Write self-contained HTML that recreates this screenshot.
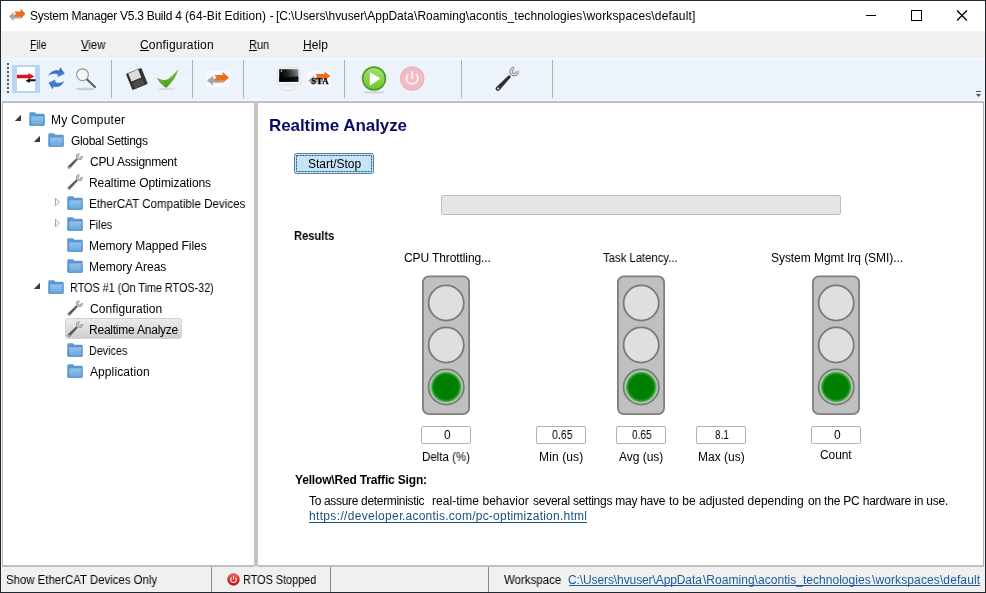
<!DOCTYPE html>
<html>
<head>
<meta charset="utf-8">
<title>System Manager</title>
<style>
html,body{margin:0;padding:0;}
body{width:986px;height:593px;overflow:hidden;position:relative;background:#f0f0f0;
 font-family:"Liberation Sans","DejaVu Sans",sans-serif;font-size:12px;color:#000;}
.abs{position:absolute;}
.g{position:absolute;left:0;top:0;width:0;height:0;}
.t{position:absolute;white-space:nowrap;line-height:14px;height:14px;will-change:transform;}
a{color:#1d4f7e;text-decoration:underline;text-decoration-skip-ink:none;}
a.b{color:#1a5c9c;}
.t u{text-decoration-skip-ink:none;}
.sel{background:linear-gradient(#ececec,#cecece);border:1px solid #d2d2d2;border-radius:3px;box-sizing:border-box;}
.tb{position:absolute;height:18px;width:50px;box-sizing:border-box;border:1px solid #b2b2b2;background:#fff;border-radius:2px;}
.sep{position:absolute;top:60px;width:1px;height:38px;background:#aab2bd;}
.ssep{position:absolute;top:567px;width:1px;height:25px;background:#8a8a8a;}
</style>
</head>
<body>
<svg width="0" height="0" style="position:absolute"><defs>
<linearGradient id="fg" x1="0" y1="0" x2="0" y2="1"><stop offset="0" stop-color="#93c5ef"/><stop offset="1" stop-color="#68a8de"/></linearGradient>
<linearGradient id="fb" x1="0" y1="0" x2="0" y2="1"><stop offset="0" stop-color="#5f9cd3"/><stop offset="1" stop-color="#4382c0"/></linearGradient>
<radialGradient id="gg" cx="0.5" cy="0.5" r="0.5"><stop offset="0" stop-color="#008000"/><stop offset="0.68" stop-color="#008000"/><stop offset="0.78" stop-color="#2a942a"/><stop offset="0.86" stop-color="#7fc07f"/><stop offset="0.94" stop-color="#c0dcc0"/><stop offset="1" stop-color="#c8e0c8"/></radialGradient>
</defs></svg>

<div class="abs" style="left:0;top:0;width:986px;height:31px;background:#fff"></div>
<div class="abs" style="left:0;top:31px;width:986px;height:27px;background:#f0f0f0"></div>
<div class="abs" style="left:0;top:58px;width:986px;height:43px;background:#ecf3fb;border-top:1px solid #f9fbfe;border-bottom:1px solid #f6f9fd;box-sizing:border-box"></div>
<div class="abs" style="left:2px;top:101px;width:252px;height:466px;background:#fff;box-sizing:border-box;border:1px solid #bcbcbc;border-top:2px solid #c0c0c0;border-bottom:2px solid #c0c0c0;border-right:none"></div>
<div class="abs" style="left:254px;top:101px;width:4px;height:465px;background:#c3c3c3"></div>
<div class="abs" style="left:258px;top:101px;width:726px;height:466px;background:#fff;box-sizing:border-box;border-top:2px solid #c0c0c0;border-bottom:2px solid #c0c0c0;border-right:1px solid #b2b2b2"></div>

<svg class="abs" style="left:7px;top:63px" width="2" height="30"><rect x="0" y="0" width="2" height="2" fill="#555"/><rect x="0" y="4" width="2" height="2" fill="#555"/><rect x="0" y="8" width="2" height="2" fill="#555"/><rect x="0" y="12" width="2" height="2" fill="#555"/><rect x="0" y="16" width="2" height="2" fill="#555"/><rect x="0" y="20" width="2" height="2" fill="#555"/><rect x="0" y="24" width="2" height="2" fill="#555"/><rect x="0" y="28" width="2" height="2" fill="#555"/></svg>
<div class="abs" style="left:12px;top:65px;width:28px;height:28px;background:#b8d6f3"></div>
<svg class="abs" style="left:17px;top:67px" width="19" height="24" viewBox="0 0 19 24">
<rect x="0" y="0" width="18" height="24" fill="#fff"/>
<path d="M0 7.800H11.5V5.900L17.4 9.500L11.5 12.600V11.300H0Z" fill="#e01020"/>
<path d="M18.5 12.2H12.8V11.6L8.600 13.800L12.8 16V14.200H18.5Z" fill="#101010"/>
</svg>
<svg class="abs" style="left:47px;top:66px" width="20" height="24" viewBox="0 0 20 24">
<defs><linearGradient id="ra" x1="0" y1="0" x2="0" y2="1"><stop offset="0" stop-color="#2a5ebc"/><stop offset="1" stop-color="#4a88e0"/></linearGradient>
<linearGradient id="rb" x1="0" y1="0" x2="0" y2="1"><stop offset="0" stop-color="#4a8ae2"/><stop offset="1" stop-color="#2e66c6"/></linearGradient></defs>
<path d="M1.100 10.100C3 6 7 3.600 12.200 4.600L13.300 1.300L17.800 7.700L10.900 10.900L10.400 8.300C7 7.200 4 8 1.100 10.100Z" fill="url(#ra)"/>
<path d="M1.400 16.800L8.100 13.500L8.700 16.200C11.500 17.200 14.500 16.800 17.200 14.700C16 19 11.500 22 6.600 20.500L5.700 23.200Z" fill="url(#rb)"/>
</svg>
<svg class="abs" style="left:73px;top:66px" width="26" height="26" viewBox="0 0 26 26">
<ellipse cx="12.5" cy="23" rx="10" ry="1.4" fill="#c9cfd8"/>
<path d="M13.800 13.200L22 21" stroke="#585858" stroke-width="1.900" stroke-linecap="round"/>
<circle cx="9.500" cy="8.700" r="5.900" fill="#f3f5f7" stroke="#979797" stroke-width="1.200"/>
</svg>
<div class="abs" style="left:111px;top:60px;width:1px;height:38px;background:#aab2bd"></div>
<div class="abs" style="left:192px;top:60px;width:1px;height:38px;background:#aab2bd"></div>
<div class="abs" style="left:243px;top:60px;width:1px;height:38px;background:#aab2bd"></div>
<div class="abs" style="left:344px;top:60px;width:1px;height:38px;background:#aab2bd"></div>
<div class="abs" style="left:461px;top:60px;width:1px;height:38px;background:#aab2bd"></div>
<div class="abs" style="left:552px;top:60px;width:1px;height:38px;background:#aab2bd"></div>
<svg class="abs" style="left:124px;top:66px" width="26" height="26" viewBox="0 0 26 26">
<g transform="rotate(-22 13 13)">
<rect x="4.6" y="4.2" width="16.6" height="17.4" rx="1" fill="#343436"/>
<rect x="7" y="4.6" width="10.6" height="8.6" fill="#dcdde0"/>
<rect x="7.6" y="14.8" width="10.6" height="6.4" fill="#4c4c50"/>
</g></svg>
<svg class="abs" style="left:155px;top:66px" width="26" height="26" viewBox="0 0 26 26">
<defs><linearGradient id="ck" x1="0" y1="0" x2="0.3" y2="1"><stop offset="0" stop-color="#86d045"/><stop offset="1" stop-color="#4c9e1c"/></linearGradient></defs>
<ellipse cx="11.6" cy="23" rx="8.6" ry="1.1" fill="#d3dae3"/>
<path d="M2 11.6 C3 15.2 7 19.2 11.2 21.9 C15.8 18 21.8 10 23.3 3.2 C18.4 8.6 14.5 12.8 11.4 13.8 C8 14.6 4.5 13.4 2 11.6Z" fill="url(#ck)"/>
</svg>
<svg class="abs" style="left:206px;top:71px" width="24" height="16" viewBox="0 0 24 16">
<rect x="0" y="0" width="24" height="16" fill="#f7f9fc"/>
<path d="M1 9.5L7 4.8V7.6H16V11.8H7V14.4Z" fill="#a8a8a8"/>
<path d="M23 6.5L16.6 1V4H8.5L10.4 6.6L8.5 9.4H16.6V12Z" fill="#e8701c"/>
</svg>
<svg class="abs" style="left:276px;top:66px" width="26" height="26" viewBox="0 0 26 26">
<defs><linearGradient id="mg" x1="0" y1="0.200" x2="1" y2="0"><stop offset="0" stop-color="#050505"/><stop offset="0.350" stop-color="#1c1c1c"/><stop offset="1" stop-color="#8e8e8e"/></linearGradient></defs>
<ellipse cx="12.600" cy="22" rx="7.200" ry="2.500" fill="#f1f3f5" stroke="#d2d6da" stroke-width="0.700"/>
<path d="M9.600 18H15.800L16.600 21.500H8.800Z" fill="#eceef0"/>
<path d="M2.600 1.800H23Q24 1.800 24 2.800V16.500L24.600 18.400H1L1.600 16.500V2.800Q1.600 1.800 2.600 1.800Z" fill="#f4f5f7" stroke="#d4d8dc" stroke-width="0.600"/>
<rect x="3.200" y="3.200" width="19.200" height="12.600" fill="url(#mg)"/>
<path d="M3.200 11.600C9 11.400 16 11 22.400 10.200V15.800H3.200Z" fill="#000" opacity="0.800"/>
<path d="M4.600 4.600L6.600 4.200L5 6.200Z" fill="#e8e8e8"/>
</svg>
<svg class="abs" style="left:307px;top:71px;will-change:transform" width="24" height="16" viewBox="0 0 24 16">
<rect x="0" y="0" width="24" height="16" fill="#f7f9fc"/>
<path d="M1 9.5L7 4.8V7.6H16V11.8H7V14.4Z" fill="#a8a8a8"/>
<path d="M23.4 5L17.6 0.6V3H8.5L10 5L8.5 7.4H17.6V9.6Z" fill="#e8701c"/>
<text x="4.2" y="13.1" font-family="'Liberation Serif','DejaVu Serif',serif" font-weight="bold" font-size="8.8" fill="#000" stroke="#000" stroke-width="0.25" letter-spacing="0.5">STA</text>
</svg>
<svg class="abs" style="left:360px;top:64px" width="28" height="32" viewBox="0 0 28 32">
<defs><linearGradient id="pg" x1="0" y1="0" x2="0" y2="1"><stop offset="0" stop-color="#a6e070"/><stop offset="1" stop-color="#6cc828"/></linearGradient></defs>
<ellipse cx="14" cy="28.4" rx="11" ry="1.2" fill="#ccd3dc"/>
<circle cx="14" cy="14.5" r="11.4" fill="url(#pg)" stroke="#4c9a24" stroke-width="1.6"/>
<path d="M9.8 8.2L20.6 14.6L9.8 21.8Z" fill="#fff"/>
</svg>
<svg class="abs" style="left:398px;top:64px" width="28" height="32" viewBox="0 0 28 32">
<circle cx="14.2" cy="14.5" r="11.6" fill="#f2bcc6" stroke="#efb0bc" stroke-width="1.2"/>
<path d="M10.4 10.2A5.6 5.6 0 1 0 18 10.2" fill="none" stroke="#fdf4f5" stroke-width="1.6"/>
<path d="M14.2 7.2V15" stroke="#fdf4f5" stroke-width="1.8"/>
</svg>
<svg class="abs" style="left:494px;top:65px" width="27" height="28" viewBox="0 0 27 28">
<defs><linearGradient id="wh" x1="0" y1="0" x2="1" y2="1"><stop offset="0" stop-color="#6a6a6a"/><stop offset="0.5" stop-color="#2c2c2c"/><stop offset="1" stop-color="#5a5a5a"/></linearGradient></defs>
<path d="M2.3 21.9 L15.1 10 L17 11.9 L5.7 25.1 A2.3 2.3 0 0 1 2.3 21.9Z" fill="url(#wh)"/>
<circle cx="4.1" cy="23.5" r="1" fill="#e4e4e4"/>
<g transform="translate(20 6.600) rotate(-48)"><path d="M2.500 2A3.100 3.100 0 1 1 2.500 -2" fill="none" stroke="#6e6e6e" stroke-width="3.200"/><path d="M2.500 2A3.100 3.100 0 1 1 2.500 -2" fill="none" stroke="#dcdcdc" stroke-width="1.800"/></g>
</svg>
<svg class="abs" style="left:976px;top:90px" width="5" height="8" viewBox="0 0 5 8"><path d="M0 1.500H5" stroke="#555" stroke-width="1"/><path d="M0 4H5L2.500 7Z" fill="#505050"/></svg>
<svg class="abs" style="left:8px;top:7px" width="18" height="16" viewBox="0 0 18 16">
<path d="M1 9.5L5.6 5V7.8H12.4V11.4H5.6V14Z" fill="#a8a8a8"/>
<path d="M17.4 6.8L12.6 1.6V4.4H6.4L7.8 7L6.4 9.6H12.6V12.2Z" fill="#e8701c"/>
</svg>
<svg class="abs" style="left:760px;top:1px" width="226" height="30" viewBox="0 0 226 30">
<path d="M106 14.5H116" stroke="#000" stroke-width="1"/>
<rect x="151.5" y="9.500" width="10" height="10" fill="none" stroke="#000" stroke-width="1"/>
<path d="M197 9.500L207 19.5M207 9.500L197 19.5" stroke="#000" stroke-width="1.25"/>
</svg>

<svg class="abs" style="left:14px;top:114px" width="8" height="8" viewBox="0 0 8 8"><path d="M7 0.800V7H0.800Z" fill="#3a3a3a"/></svg>
<svg class="abs" style="left:29px;top:112px" width="16" height="14" viewBox="0 0 16 14"><path d="M0.3 1.3 Q0.3 0.3 1.3 0.3 H5.8 Q6.4 0.3 6.8 1 L7.2 1.8 H14.6 Q15.7 1.8 15.7 2.9 V12.7 Q15.7 13.800 14.6 13.800 H1.4 Q0.3 13.800 0.3 12.7Z" fill="url(#fb)"/><rect x="1.800" y="4.100" width="13" height="8.900" rx="0.500" fill="url(#fg)" stroke="#5791cb" stroke-width="0.600"/></svg>
<svg class="abs" style="left:33px;top:135px" width="8" height="8" viewBox="0 0 8 8"><path d="M7 0.800V7H0.800Z" fill="#3a3a3a"/></svg>
<svg class="abs" style="left:48px;top:133px" width="16" height="14" viewBox="0 0 16 14"><path d="M0.3 1.3 Q0.3 0.3 1.3 0.3 H5.8 Q6.4 0.3 6.8 1 L7.2 1.8 H14.6 Q15.7 1.8 15.7 2.9 V12.7 Q15.7 13.800 14.6 13.800 H1.4 Q0.3 13.800 0.3 12.7Z" fill="url(#fb)"/><rect x="1.800" y="4.100" width="13" height="8.900" rx="0.500" fill="url(#fg)" stroke="#5791cb" stroke-width="0.600"/></svg>
<svg class="abs" style="left:67px;top:153px" width="16" height="16" viewBox="0 0 16 16"><path d="M0.7 13.5 L9.3 5.3 L10.8 6.8 L2.9 15.5 A1.55 1.55 0 0 1 0.7 13.5Z" fill="#5c5c5c"/><circle cx="1.9" cy="14.4" r="0.7" fill="#d0d0d0"/><g transform="translate(12.4 3.7) rotate(-50)"><path d="M1.8 1.5A2.3 2.3 0 1 1 1.8 -1.5" fill="none" stroke="#7d7d7d" stroke-width="2.3"/><path d="M1.8 1.5A2.3 2.3 0 1 1 1.8 -1.5" fill="none" stroke="#cdcdcd" stroke-width="1.2"/></g></svg>
<svg class="abs" style="left:67px;top:174px" width="16" height="16" viewBox="0 0 16 16"><path d="M0.7 13.5 L9.3 5.3 L10.8 6.8 L2.9 15.5 A1.55 1.55 0 0 1 0.7 13.5Z" fill="#5c5c5c"/><circle cx="1.9" cy="14.4" r="0.7" fill="#d0d0d0"/><g transform="translate(12.4 3.7) rotate(-50)"><path d="M1.8 1.5A2.3 2.3 0 1 1 1.8 -1.5" fill="none" stroke="#7d7d7d" stroke-width="2.3"/><path d="M1.8 1.5A2.3 2.3 0 1 1 1.8 -1.5" fill="none" stroke="#cdcdcd" stroke-width="1.2"/></g></svg>
<svg class="abs" style="left:54px;top:197px" width="7" height="10" viewBox="0 0 7 10"><path d="M1.5 1.2L5.3 5L1.5 8.8Z" fill="#fff" stroke="#a6a6a6" stroke-width="1"/></svg>
<svg class="abs" style="left:67px;top:196px" width="16" height="14" viewBox="0 0 16 14"><path d="M0.3 1.3 Q0.3 0.3 1.3 0.3 H5.8 Q6.4 0.3 6.8 1 L7.2 1.8 H14.6 Q15.7 1.8 15.7 2.9 V12.7 Q15.7 13.800 14.6 13.800 H1.4 Q0.3 13.800 0.3 12.7Z" fill="url(#fb)"/><rect x="1.800" y="4.100" width="13" height="8.900" rx="0.500" fill="url(#fg)" stroke="#5791cb" stroke-width="0.600"/></svg>
<svg class="abs" style="left:54px;top:218px" width="7" height="10" viewBox="0 0 7 10"><path d="M1.5 1.2L5.3 5L1.5 8.8Z" fill="#fff" stroke="#a6a6a6" stroke-width="1"/></svg>
<svg class="abs" style="left:67px;top:217px" width="16" height="14" viewBox="0 0 16 14"><path d="M0.3 1.3 Q0.3 0.3 1.3 0.3 H5.8 Q6.4 0.3 6.8 1 L7.2 1.8 H14.6 Q15.7 1.8 15.7 2.9 V12.7 Q15.7 13.800 14.6 13.800 H1.4 Q0.3 13.800 0.3 12.7Z" fill="url(#fb)"/><rect x="1.800" y="4.100" width="13" height="8.900" rx="0.500" fill="url(#fg)" stroke="#5791cb" stroke-width="0.600"/></svg>
<svg class="abs" style="left:67px;top:238px" width="16" height="14" viewBox="0 0 16 14"><path d="M0.3 1.3 Q0.3 0.3 1.3 0.3 H5.8 Q6.4 0.3 6.8 1 L7.2 1.8 H14.6 Q15.7 1.8 15.7 2.9 V12.7 Q15.7 13.800 14.6 13.800 H1.4 Q0.3 13.800 0.3 12.7Z" fill="url(#fb)"/><rect x="1.800" y="4.100" width="13" height="8.900" rx="0.500" fill="url(#fg)" stroke="#5791cb" stroke-width="0.600"/></svg>
<svg class="abs" style="left:67px;top:259px" width="16" height="14" viewBox="0 0 16 14"><path d="M0.3 1.3 Q0.3 0.3 1.3 0.3 H5.8 Q6.4 0.3 6.8 1 L7.2 1.8 H14.6 Q15.7 1.8 15.7 2.9 V12.7 Q15.7 13.800 14.6 13.800 H1.4 Q0.3 13.800 0.3 12.7Z" fill="url(#fb)"/><rect x="1.800" y="4.100" width="13" height="8.900" rx="0.500" fill="url(#fg)" stroke="#5791cb" stroke-width="0.600"/></svg>
<svg class="abs" style="left:33px;top:282px" width="8" height="8" viewBox="0 0 8 8"><path d="M7 0.800V7H0.800Z" fill="#3a3a3a"/></svg>
<svg class="abs" style="left:48px;top:280px" width="16" height="14" viewBox="0 0 16 14"><path d="M0.3 1.3 Q0.3 0.3 1.3 0.3 H5.8 Q6.4 0.3 6.8 1 L7.2 1.8 H14.6 Q15.7 1.8 15.7 2.9 V12.7 Q15.7 13.800 14.6 13.800 H1.4 Q0.3 13.800 0.3 12.7Z" fill="url(#fb)"/><rect x="1.800" y="4.100" width="13" height="8.900" rx="0.500" fill="url(#fg)" stroke="#5791cb" stroke-width="0.600"/></svg>
<svg class="abs" style="left:67px;top:300px" width="16" height="16" viewBox="0 0 16 16"><path d="M0.7 13.5 L9.3 5.3 L10.8 6.8 L2.9 15.5 A1.55 1.55 0 0 1 0.7 13.5Z" fill="#5c5c5c"/><circle cx="1.9" cy="14.4" r="0.7" fill="#d0d0d0"/><g transform="translate(12.4 3.7) rotate(-50)"><path d="M1.8 1.5A2.3 2.3 0 1 1 1.8 -1.5" fill="none" stroke="#7d7d7d" stroke-width="2.3"/><path d="M1.8 1.5A2.3 2.3 0 1 1 1.8 -1.5" fill="none" stroke="#cdcdcd" stroke-width="1.2"/></g></svg>
<div class="abs sel" style="left:65px;top:318px;width:117px;height:21px"></div>
<svg class="abs" style="left:67px;top:321px" width="16" height="16" viewBox="0 0 16 16"><path d="M0.7 13.5 L9.3 5.3 L10.8 6.8 L2.9 15.5 A1.55 1.55 0 0 1 0.7 13.5Z" fill="#5c5c5c"/><circle cx="1.9" cy="14.4" r="0.7" fill="#d0d0d0"/><g transform="translate(12.4 3.7) rotate(-50)"><path d="M1.8 1.5A2.3 2.3 0 1 1 1.8 -1.5" fill="none" stroke="#7d7d7d" stroke-width="2.3"/><path d="M1.8 1.5A2.3 2.3 0 1 1 1.8 -1.5" fill="none" stroke="#cdcdcd" stroke-width="1.2"/></g></svg>
<svg class="abs" style="left:67px;top:343px" width="16" height="14" viewBox="0 0 16 14"><path d="M0.3 1.3 Q0.3 0.3 1.3 0.3 H5.8 Q6.4 0.3 6.8 1 L7.2 1.8 H14.6 Q15.7 1.8 15.7 2.9 V12.7 Q15.7 13.800 14.6 13.800 H1.4 Q0.3 13.800 0.3 12.7Z" fill="url(#fb)"/><rect x="1.800" y="4.100" width="13" height="8.900" rx="0.500" fill="url(#fg)" stroke="#5791cb" stroke-width="0.600"/></svg>
<svg class="abs" style="left:67px;top:364px" width="16" height="14" viewBox="0 0 16 14"><path d="M0.3 1.3 Q0.3 0.3 1.3 0.3 H5.8 Q6.4 0.3 6.8 1 L7.2 1.8 H14.6 Q15.7 1.8 15.7 2.9 V12.7 Q15.7 13.800 14.6 13.800 H1.4 Q0.3 13.800 0.3 12.7Z" fill="url(#fb)"/><rect x="1.800" y="4.100" width="13" height="8.900" rx="0.500" fill="url(#fg)" stroke="#5791cb" stroke-width="0.600"/></svg>
<svg class="abs" style="left:294px;top:153px" width="80" height="21" viewBox="0 0 80 21"><rect x="0.5" y="0.5" width="79" height="20" rx="2" fill="#c7e3f7" stroke="#4f82a8"/><rect x="2.5" y="2.5" width="75" height="16" fill="none" stroke="#2a566e" stroke-dasharray="2 1"/></svg>
<div class="abs" style="left:441px;top:195px;width:400px;height:20px;box-sizing:border-box;border:1px solid #bcbcbc;background:#e6e6e6;border-radius:2px"></div>
<svg class="abs" style="left:421px;top:274px" width="50" height="143" viewBox="0 0 50 143"><rect x="1.9" y="2.4" width="46.2" height="137.7" rx="6" ry="6" fill="#c0c0c0" stroke="#7e7e7e" stroke-width="1.8"/><circle cx="25.2" cy="29" r="17.6" fill="#dfdfdf" stroke="#7a7a7a" stroke-width="1.8"/><circle cx="25.2" cy="71" r="17.6" fill="#dfdfdf" stroke="#7a7a7a" stroke-width="1.8"/><circle cx="25.2" cy="113" r="17.6" fill="url(#gg)" stroke="#7a7a7a" stroke-width="1.8"/></svg>
<svg class="abs" style="left:616px;top:274px" width="50" height="143" viewBox="0 0 50 143"><rect x="1.9" y="2.4" width="46.2" height="137.7" rx="6" ry="6" fill="#c0c0c0" stroke="#7e7e7e" stroke-width="1.8"/><circle cx="25.2" cy="29" r="17.6" fill="#dfdfdf" stroke="#7a7a7a" stroke-width="1.8"/><circle cx="25.2" cy="71" r="17.6" fill="#dfdfdf" stroke="#7a7a7a" stroke-width="1.8"/><circle cx="25.2" cy="113" r="17.6" fill="url(#gg)" stroke="#7a7a7a" stroke-width="1.8"/></svg>
<svg class="abs" style="left:811px;top:274px" width="50" height="143" viewBox="0 0 50 143"><rect x="1.9" y="2.4" width="46.2" height="137.7" rx="6" ry="6" fill="#c0c0c0" stroke="#7e7e7e" stroke-width="1.8"/><circle cx="25.2" cy="29" r="17.6" fill="#dfdfdf" stroke="#7a7a7a" stroke-width="1.8"/><circle cx="25.2" cy="71" r="17.6" fill="#dfdfdf" stroke="#7a7a7a" stroke-width="1.8"/><circle cx="25.2" cy="113" r="17.6" fill="url(#gg)" stroke="#7a7a7a" stroke-width="1.8"/></svg>
<div class="tb" style="left:421px;top:426px"></div>
<div class="tb" style="left:536px;top:426px"></div>
<div class="tb" style="left:616px;top:426px"></div>
<div class="tb" style="left:696px;top:426px"></div>
<div class="tb" style="left:811px;top:426px"></div>
<div class="abs" style="left:569px;top:585px;width:411px;height:1px;background:#1a5c9c"></div>
<div class="abs" style="left:309px;top:522px;width:278px;height:1px;background:#1d4f7e"></div>
<div class="ssep" style="left:211px"></div>
<div class="ssep" style="left:330px"></div>
<div class="ssep" style="left:488px"></div>
<svg class="abs" style="left:227px;top:573px" width="13" height="13" viewBox="0 0 13 13"><defs><linearGradient id="rg" x1="0" y1="0" x2="0" y2="1"><stop offset="0" stop-color="#f07070"/><stop offset="0.5" stop-color="#dc2828"/><stop offset="1" stop-color="#b81414"/></linearGradient></defs><circle cx="6.5" cy="6.5" r="5.9" fill="url(#rg)" stroke="#c83030" stroke-width="0.6"/><path d="M4.600 4.700A2.800 2.800 0 1 0 8.400 4.700" fill="none" stroke="#fff" stroke-width="1.100"/><path d="M6.500 3V6.600" stroke="#fff" stroke-width="1.100"/></svg>
<div class="g"><span class="t" id="ti1" style="left:30px;top:9px;font-size:12px;letter-spacing:-0.267px;">System Manager V5.3 Build 4</span> <span class="t" id="ti2" style="left:185px;top:9px;font-size:12px;letter-spacing:0.116px;">(64-Bit Edition) -</span> <span class="t" id="ti3" style="left:276px;top:9px;font-size:12px;letter-spacing:-0.078px;">[C:\Users\hvuser\AppData</span><span class="t" id="ti4" style="left:414px;top:9px;font-size:12px;letter-spacing:0.051px;">\Roaming\acontis_technologies</span><span class="t" id="ti5" style="left:583px;top:9px;font-size:12px;letter-spacing:0.152px;">\workspaces\default]</span></div>
<span class="t" id="m1" style="left:30px;top:38px;font-size:12px;letter-spacing:0.000px;transform:scaleX(0.8497);transform-origin:0 50%;"><u>F</u>ile</span>
<span class="t" id="m2" style="left:81px;top:38px;font-size:12px;letter-spacing:0.000px;transform:scaleX(0.9386);transform-origin:0 50%;"><u>V</u>iew</span>
<span class="t" id="m3" style="left:140px;top:38px;font-size:12px;letter-spacing:0.180px;"><u>C</u>onfiguration</span>
<span class="t" id="m4" style="left:249px;top:38px;font-size:12px;letter-spacing:0.000px;transform:scaleX(0.9177);transform-origin:0 50%;"><u>R</u>un</span>
<span class="t" id="m5" style="left:303px;top:38px;font-size:12px;letter-spacing:0.060px;"><u>H</u>elp</span>
<span class="t" id="t0" style="left:51px;top:113px;font-size:12px;letter-spacing:0.198px;">My Computer</span>
<span class="t" id="t1" style="left:71px;top:134px;font-size:12px;letter-spacing:-0.321px;">Global Settings</span>
<span class="t" id="t2" style="left:90px;top:155px;font-size:12px;letter-spacing:-0.277px;">CPU Assignment</span>
<span class="t" id="t3" style="left:89px;top:176px;font-size:12px;letter-spacing:-0.060px;">Realtime Optimizations</span>
<span class="t" id="t4" style="left:89px;top:197px;font-size:12px;letter-spacing:0.000px;transform:scaleX(0.9677);transform-origin:0 50%;">EtherCAT Compatible Devices</span>
<span class="t" id="t5" style="left:89px;top:218px;font-size:12px;letter-spacing:0.000px;transform:scaleX(0.9208);transform-origin:0 50%;">Files</span>
<span class="t" id="t6" style="left:89px;top:239px;font-size:12px;letter-spacing:-0.060px;">Memory Mapped Files</span>
<span class="t" id="t7" style="left:89px;top:260px;font-size:12px;letter-spacing:-0.000px;">Memory Areas</span>
<span class="t" id="t8" style="left:70px;top:281px;font-size:12px;letter-spacing:0.000px;transform:scaleX(0.8995);transform-origin:0 50%;">RTOS #1 (On Time RTOS-32)</span>
<span class="t" id="t9" style="left:90px;top:302px;font-size:12px;letter-spacing:0.075px;">Configuration</span>
<span class="t" id="t10" style="left:89px;top:323px;font-size:12px;letter-spacing:-0.228px;">Realtime Analyze</span>
<span class="t" id="t11" style="left:89px;top:344px;font-size:12px;letter-spacing:0.000px;transform:scaleX(0.8968);transform-origin:0 50%;">Devices</span>
<span class="t" id="t12" style="left:90px;top:365px;font-size:12px;letter-spacing:0.090px;">Application</span>
<span class="t" id="hd" style="left:269px;top:119px;font-size:17px;letter-spacing:-0.078px;font-weight:bold;color:#0a0a66;">Realtime Analyze</span>
<span class="t" id="btnt" style="left:308px;top:157px;font-size:12px;letter-spacing:-0.020px;">Start/Stop</span>
<span class="t" id="res" style="left:294px;top:229px;font-size:12px;letter-spacing:0.000px;font-weight:bold;transform:scaleX(0.9278);transform-origin:0 50%;">Results</span>
<span class="t" id="l1" style="left:404px;top:251px;font-size:12px;letter-spacing:-0.101px;">CPU Throttling...</span>
<span class="t" id="l2" style="left:603px;top:251px;font-size:12px;letter-spacing:0.000px;transform:scaleX(0.9428);transform-origin:0 50%;">Task Latency...</span>
<span class="t" id="l3" style="left:771px;top:251px;font-size:12px;letter-spacing:-0.055px;">System Mgmt Irq (SMI)...</span>
<span class="t" id="v1" style="left:444px;top:428px;font-size:12px;letter-spacing:0.000px;">0</span>
<span class="t" id="v2" style="left:552px;top:428px;font-size:12px;letter-spacing:0.000px;transform:scaleX(0.8800);transform-origin:0 50%;">0.65</span>
<span class="t" id="v3" style="left:632px;top:428px;font-size:12px;letter-spacing:0.000px;transform:scaleX(0.8389);transform-origin:0 50%;">0.65</span>
<span class="t" id="v4" style="left:715px;top:428px;font-size:12px;letter-spacing:0.000px;transform:scaleX(0.8313);transform-origin:0 50%;">8.1</span>
<span class="t" id="v5" style="left:834px;top:428px;font-size:12px;letter-spacing:0.000px;">0</span>
<span class="t" id="c1" style="left:422px;top:450px;font-size:12px;letter-spacing:0.000px;transform:scaleX(0.9607);transform-origin:0 50%;">Delta (%)</span>
<span class="t" id="c2" style="left:539px;top:450px;font-size:12px;letter-spacing:0.129px;">Min (us)</span>
<span class="t" id="c3" style="left:619px;top:450px;font-size:12px;letter-spacing:-0.026px;">Avg (us)</span>
<span class="t" id="c4" style="left:698px;top:450px;font-size:12px;letter-spacing:-0.000px;">Max (us)</span>
<span class="t" id="c5" style="left:820px;top:448px;font-size:12px;letter-spacing:-0.090px;">Count</span>
<span class="t" id="yr" style="left:295px;top:473px;font-size:12px;letter-spacing:-0.172px;font-weight:bold;">Yellow\Red Traffic Sign:</span>
<div class="g"><span class="t" id="ta1" style="left:309px;top:494px;font-size:12px;letter-spacing:-0.327px;">To assure deterministic</span> <span class="t" id="ta2" style="left:432px;top:494px;font-size:12px;letter-spacing:0.042px;">real-time behavior</span> <span class="t" id="ta3" style="left:533px;top:494px;font-size:12px;letter-spacing:-0.262px;">several settings may have</span> <span class="t" id="ta4" style="left:669px;top:494px;font-size:12px;letter-spacing:-0.008px;">to be adjusted depending</span> <span class="t" id="ta5" style="left:808px;top:494px;font-size:12px;letter-spacing:-0.202px;">on the PC hardware in use.</span></div>
<div class="g"><span class="t" id="lk1" style="left:309px;top:509px;font-size:12px;letter-spacing:0.338px;color:#1d4f7e;">https://developer</span><span class="t" id="lk2" style="left:402px;top:509px;font-size:12px;letter-spacing:0.233px;color:#1d4f7e;">.acontis.com/pc-optimization.html</span></div>
<span class="t" id="s1" style="left:6px;top:573px;font-size:12px;letter-spacing:0.000px;transform:scaleX(0.9508);transform-origin:0 50%;">Show EtherCAT Devices Only</span>
<span class="t" id="s2" style="left:243px;top:573px;font-size:12px;letter-spacing:0.000px;transform:scaleX(0.9056);transform-origin:0 50%;">RTOS Stopped</span>
<span class="t" id="s3" style="left:504px;top:573px;font-size:12px;letter-spacing:0.000px;transform:scaleX(0.9553);transform-origin:0 50%;">Workspace</span>
<div class="g"><span class="t" id="s4a" style="left:568px;top:573px;font-size:12px;letter-spacing:-0.102px;color:#1a5c9c;">C:\Users\hvuser\AppData</span><span class="t" id="s4b" style="left:703px;top:573px;font-size:12px;letter-spacing:0.032px;color:#1a5c9c;">\Roaming\acontis_technologies</span><span class="t" id="s4c" style="left:872px;top:573px;font-size:12px;letter-spacing:0.110px;color:#1a5c9c;">\workspaces\default</span></div>
<div class="abs" style="left:0;top:0;width:986px;height:1px;background:#1c2b31"></div>
<div class="abs" style="left:0;top:0;width:1px;height:593px;background:#1c2b31"></div>
<div class="abs" style="left:985px;top:0;width:1px;height:593px;background:#1c2b31"></div>
<div class="abs" style="left:0;top:592px;width:986px;height:1px;background:#1c2b31"></div>
</body>
</html>
